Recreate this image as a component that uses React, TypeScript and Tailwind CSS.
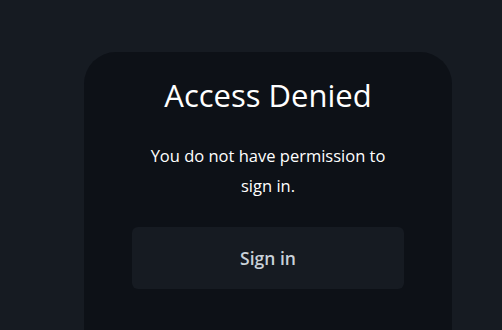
export default function App() {
  return (
    <div className="h-screen w-full overflow-hidden bg-[#161b22] pt-[52px] pl-[84px]" style={{ fontFamily: '"Open Sans", "Noto Sans", sans-serif' }}>
      <div className="w-[368px] h-[320px] rounded-[32px] bg-[#0d1117] px-12 pt-[21px] flex flex-col items-center">
        <h1 className="text-[31px] leading-[44px] text-white font-normal">Access Denied</h1>
        <p className="mt-[24px] max-w-[250px] text-center text-[16.5px] leading-[30px] text-white">
          You do not have permission to sign in.
        </p>
        <button className="mt-[26px] w-full h-[62px] rounded-md bg-[#161b22] text-[17.5px] font-semibold text-[#c9d1d9]">
          Sign in
        </button>
      </div>
    </div>
  );
}
